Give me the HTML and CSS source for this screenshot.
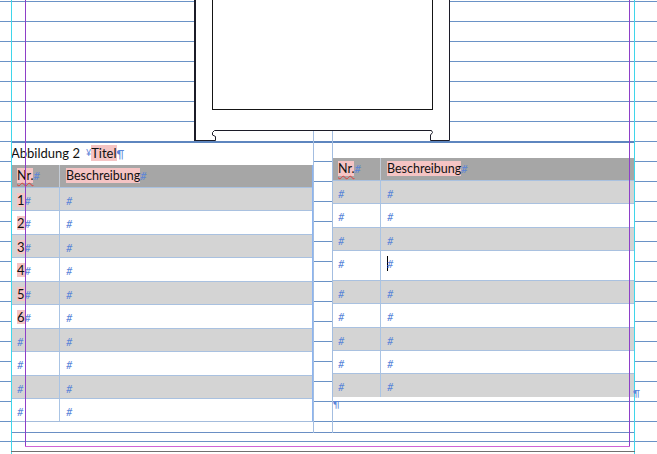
FILE: index.html
```html
<!DOCTYPE html>
<html lang="de">
<head>
    <meta charset="UTF-8">
    <meta name="viewport" content="width=device-width, initial-scale=1.0">
    <title>Layout - Abbildung 2</title>
    <link rel="stylesheet" href="styles.css">
</head>
<body>
    <div class="spread">
        <!-- Two-column text frame with caption and the tables -->
        <div class="text-frame">
            <div class="column">
                <p class="caption">Abbildung 2<span class="anchor">¥</span><span class="hl">Titel</span><span class="mark pilcrow">¶</span></p>
                <div class="table left-table">
                    <div class="row head">
                        <div class="cell"><span class="hl typo">Nr.</span><span class="mark">#</span></div>
                        <div class="cell"><span class="hl">Beschreibung</span><span class="mark">#</span></div>
                    </div>
                    <div class="row shade">
                        <div class="cell"><span class="hl">1</span><span class="mark">#</span></div>
                        <div class="cell"><span class="mark">#</span></div>
                    </div>
                    <div class="row">
                        <div class="cell"><span class="hl">2</span><span class="mark">#</span></div>
                        <div class="cell"><span class="mark">#</span></div>
                    </div>
                    <div class="row shade">
                        <div class="cell"><span class="hl">3</span><span class="mark">#</span></div>
                        <div class="cell"><span class="mark">#</span></div>
                    </div>
                    <div class="row">
                        <div class="cell"><span class="hl">4</span><span class="mark">#</span></div>
                        <div class="cell"><span class="mark">#</span></div>
                    </div>
                    <div class="row shade">
                        <div class="cell"><span class="hl">5</span><span class="mark">#</span></div>
                        <div class="cell"><span class="mark">#</span></div>
                    </div>
                    <div class="row">
                        <div class="cell"><span class="hl">6</span><span class="mark">#</span></div>
                        <div class="cell"><span class="mark">#</span></div>
                    </div>
                    <div class="row shade">
                        <div class="cell"><span class="mark">#</span></div>
                        <div class="cell"><span class="mark">#</span></div>
                    </div>
                    <div class="row">
                        <div class="cell"><span class="mark">#</span></div>
                        <div class="cell"><span class="mark">#</span></div>
                    </div>
                    <div class="row shade">
                        <div class="cell"><span class="mark">#</span></div>
                        <div class="cell"><span class="mark">#</span></div>
                    </div>
                    <div class="row">
                        <div class="cell"><span class="mark">#</span></div>
                        <div class="cell"><span class="mark">#</span></div>
                    </div>
                </div>
            </div>

            <div class="gutter"></div>

            <div class="column">
                <div class="spacer"></div>
                <div class="table right-table">
                    <div class="row head">
                        <div class="cell"><span class="hl typo">Nr.</span><span class="mark">#</span></div>
                        <div class="cell"><span class="hl">Beschreibung</span><span class="mark">#</span></div>
                    </div>
                    <div class="row shade">
                        <div class="cell"><span class="mark">#</span></div>
                        <div class="cell"><span class="mark">#</span></div>
                    </div>
                    <div class="row">
                        <div class="cell"><span class="mark">#</span></div>
                        <div class="cell"><span class="mark">#</span></div>
                    </div>
                    <div class="row shade">
                        <div class="cell"><span class="mark">#</span></div>
                        <div class="cell"><span class="mark">#</span></div>
                    </div>
                    <div class="row tall">
                        <div class="cell"><span class="mark">#</span></div>
                        <div class="cell"><span class="caret"></span><span class="mark">#</span></div>
                    </div>
                    <div class="row shade">
                        <div class="cell"><span class="mark">#</span></div>
                        <div class="cell"><span class="mark">#</span></div>
                    </div>
                    <div class="row">
                        <div class="cell"><span class="mark">#</span></div>
                        <div class="cell"><span class="mark">#</span></div>
                    </div>
                    <div class="row shade">
                        <div class="cell"><span class="mark">#</span></div>
                        <div class="cell"><span class="mark">#</span></div>
                    </div>
                    <div class="row">
                        <div class="cell"><span class="mark">#</span></div>
                        <div class="cell"><span class="mark">#</span></div>
                    </div>
                    <div class="row shade">
                        <div class="cell"><span class="mark">#</span></div>
                        <div class="cell"><span class="mark">#</span></div>
                    </div>
                </div>
                <p class="after-table">¶</p>
            </div>
        </div>

        <!-- column guides -->
        <div class="guide col-guide col-guide-a"></div>
        <div class="guide col-guide col-guide-b"></div>

        <!-- placed image frame, anchored above the caption -->
        <svg class="image-frame" width="657" height="146" viewBox="0 0 657 146">
            <path d="M195.5,-2 V140.5 H215.5 V136.5 L212.5,135 V132.5 L214.5,130.5 H431.5 L432.5,132.5 L430.5,135 V140.5 H449.5 V-2"
                  fill="#fff" stroke="#1c1c28" stroke-width="1"/>
            <line x1="195" y1="-2" x2="195" y2="141" stroke="#1c1c28" stroke-width="2"/>
            <rect x="212.5" y="-2" width="220" height="111.5" fill="none" stroke="#151515" stroke-width="1"/>
        </svg>

        <!-- margin and bleed guides -->
        <div class="guide cyan cyan-left"></div>
        <div class="guide cyan cyan-right"></div>
        <div class="guide margin margin-left"></div>
        <div class="guide margin margin-right"></div>
        <div class="guide margin-bottom"></div>
        <div class="guide page-edge"></div>

        <span class="story-end">¶</span>
    </div>
</body>
</html>
```

FILE: styles.css
```css
body {
    margin: 0;
    font-family: Lato, "Open Sans", sans-serif;
    background: #fff;
    color: #111;
}

/* page with the baseline grid every 20px */
.spread {
    position: relative;
    width: 657px;
    height: 454px;
    overflow: hidden;
    background-color: #fff;
    background-image: linear-gradient(to bottom,
        transparent 1px,
        #6a92c6 1px, #6a92c6 2px,
        transparent 2px);
    background-size: 100% 20px;
    background-repeat: repeat;
}

.text-frame {
    position: absolute;
    left: 11px;
    top: 141px;
    width: 623px;
    height: 292px;
    box-sizing: border-box;
    border-top: 2px solid #5e86bf;
    border-bottom: 1px solid #6a8fc4;
    display: grid;
    grid-template-columns: 302px 19px 302px;
}

.column {
    position: relative;
}

.caption {
    margin: 0;
    height: 22px;
    box-sizing: border-box;
    padding-top: 2px;
    background: #fff;
    font-size: 13px;
    line-height: 16px;
}

.anchor {
    display: inline-block;
    margin-left: 6px;
    margin-right: 0;
    font-size: 9px;
    color: #5b84d8;
    vertical-align: top;
    line-height: 15px;
}

.spacer {
    height: 15px;
}

.table {
    display: flex;
    flex-direction: column;
}

.left-table {
    border-right: 1px solid #8cb4f0;
    border-bottom: 1px solid #a4bcdc;
}

.row {
    display: grid;
    grid-template-columns: 49px 1fr;
    height: 23.45px;
    box-sizing: border-box;
    border-top: 1px solid #a9c1e0;
    background: #fff;
}

.right-table .row {
    height: 23.35px;
}

.right-table .row.tall {
    height: 30px;
}

.row.shade {
    background: #d4d4d4;
}

.row.head {
    height: 22px;
    border-top: none;
    background: #a6a6a6;
}

.cell {
    padding: 5px 0 0 6px;
    font-size: 13px;
    line-height: 14px;
    white-space: nowrap;
}

.cell:first-child {
    border-right: 1px solid #aac4e4;
}

.row.head .cell {
    padding-top: 3px;
    line-height: 15px;
    font-size: 12.5px;
}

.row.head .cell:first-child {
    border-right-color: #c4ccd6;
}

/* missing-font highlight */
.hl {
    display: inline-block;
    background: #f5c4c4;
}

.typo {
    text-decoration: underline wavy #e23b3b;
    text-decoration-thickness: 1px;
    text-underline-offset: 2px;
}

/* hidden characters */
.mark {
    color: #5b84d8;
    font-size: 11px;
    font-style: italic;
}

.pilcrow {
    font-style: normal;
}

.caret {
    display: inline-block;
    width: 1px;
    height: 15px;
    margin-right: -1px;
    background: #000;
    vertical-align: top;
}

.after-table {
    margin: 2px 0 0 1px;
    font-size: 10px;
    line-height: 10px;
    color: #5b84d8;
}

.image-frame {
    position: absolute;
    left: 0;
    top: 0;
}

.guide {
    position: absolute;
}

.col-guide {
    top: 0;
    width: 1px;
    height: 433px;
    background: #a3bde0;
}

.col-guide-a {
    left: 313px;
}

.col-guide-b {
    left: 332px;
}

.cyan {
    top: 0;
    width: 1px;
    height: 454px;
    background: #3fd6ea;
}

.cyan-left {
    left: 11px;
}

.cyan-right {
    left: 634px;
}

.margin {
    top: 0;
    width: 1px;
    height: 447px;
    background: #8e3fc8;
}

.margin-left {
    left: 25px;
}

.margin-right {
    left: 629px;
}

.margin-bottom {
    left: 25px;
    top: 446px;
    width: 605px;
    height: 1px;
    background: #d064d6;
}

.page-edge {
    left: 11px;
    top: 451px;
    width: 624px;
    height: 1px;
    background: #707070;
}

.story-end {
    position: absolute;
    left: 633px;
    top: 387px;
    font-size: 10px;
    line-height: 12px;
    color: #5b84d8;
}
```
